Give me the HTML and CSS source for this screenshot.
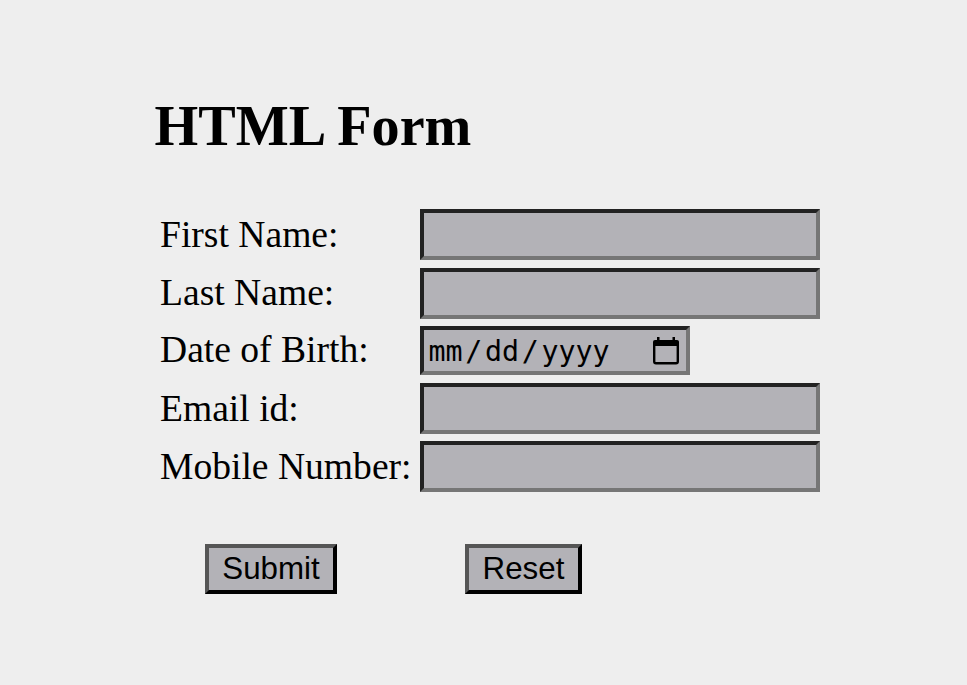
FILE: index.html
```html
<!DOCTYPE html>
<html lang="en">
<head>
<meta charset="utf-8">
<title>HTML Form</title>
<link rel="stylesheet" href="styles.css">
</head>
<body>
<form class="form">
  <h1 class="title">HTML Form</h1>
  <div class="fields">
    <label class="label" for="first">First Name:</label><input class="field" id="first" type="text">
    <label class="label label-last" for="last">Last Name:</label><input class="field" id="last" type="text">
    <label class="label label-date">Date of Birth:</label>
    <div class="field date"><span class="mask">mm<span class="slash">/</span>dd<span class="slash">/</span>yyyy</span>
      <svg class="calendar" viewBox="0 0 26 28"><rect x="1.200" y="4.700" width="23.600" height="21.600" rx="1.800" fill="none" stroke="#000" stroke-width="2.400"/><path d="M2 3h22q2 0 2 2V9H0V5q0-2 2-2zM4 0h2.500v4.500H4zM19.500 0H22v4.500h-2.500z"/></svg>
    </div>
    <label class="label" for="email">Email id:</label><input class="field" id="email" type="text">
    <label class="label" for="mobile">Mobile Number:</label><input class="field" id="mobile" type="text">
  </div>
  <div class="actions">
    <button class="button submit" type="button">Submit</button>
    <button class="button reset" type="reset">Reset</button>
  </div>
</form>
</body>
</html>
```
FILE: styles.css
```css
* { box-sizing: border-box; }
body { margin: 0; background: #eee; color: #000; font-family: "Liberation Serif", serif; }
.form { padding: 93px 0 0 154px; }
.title { margin: 0; padding-left: 0.600px; font-size: 56.2px; line-height: 66px; font-weight: bold; white-space: nowrap; }
.fields { display: grid; grid-template-columns: 260px 400px; grid-template-rows: 51px 51px 49px 51px 51px; row-gap: 7.500px; margin: 50px 0 0 6px; }
.label { height: 49px; font-size: 37.6px; line-height: 52px; white-space: nowrap; }
.label-last { line-height: 50px; }
.label-date { line-height: 48px; }
.field { width: 399.5px; height: 51px; margin: 0; padding: 0; border: 4px solid; border-color: #222 #767676 #767676 #222; background: #b3b2b7; }
.date { display: flex; align-items: center; justify-content: space-between; width: 269.500px; height: 49px; padding: 0 7px 0 4.500px; }
.mask { padding-top: 2px; font: 28.3px/40px "DejaVu Sans Mono", monospace; white-space: nowrap; }
.slash { margin: 0 2.700px; }
.calendar { width: 26px; height: 28px; }
.actions { display: flex; gap: 128px; margin: 52px 0 0 51px; }
.button { height: 50px; padding: 0; border: 4px solid; border-color: #555 #000 #000 #555; background: #b3b2b7; color: #000; font: 31.3px/40px "Liberation Sans", sans-serif; }
.submit { width: 132px; }
.reset { width: 117px; }
```
